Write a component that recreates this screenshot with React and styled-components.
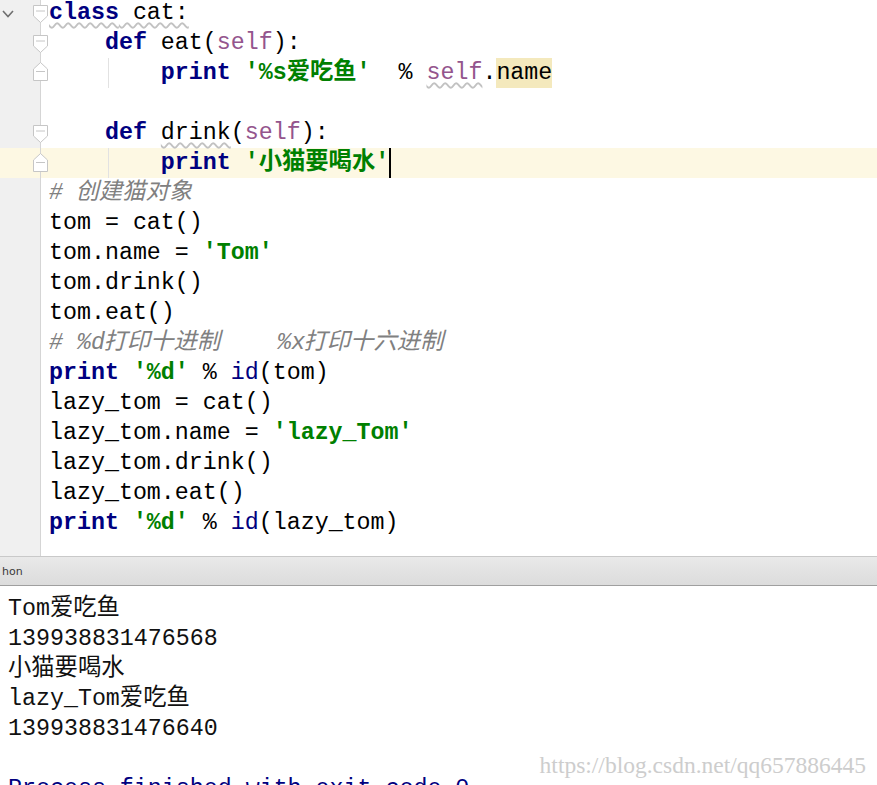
import React from 'react';
import styled, { createGlobalStyle } from 'styled-components';

const GlobalStyle = createGlobalStyle`
  html, body {
    margin: 0;
    padding: 0;
    width: 877px;
    height: 785px;
    overflow: hidden;
    background: #ffffff;
  }
`;

const CODE_FONT = `"Liberation Mono", "Noto Sans CJK SC", monospace`;

const Page = styled.div`
  width: 877px;
  height: 785px;
  display: flex;
  flex-direction: column;
  overflow: hidden;
  position: relative;
  font-family: ${CODE_FONT};
`;

/* ---------- editor ---------- */

const Editor = styled.div`
  height: 556px;
  flex: none;
  display: flex;
  flex-direction: column;
  border-bottom: 1px solid #c9c9c9;
  overflow: hidden;
`;

const Lines = styled.div`
  margin-top: -2px;
  display: flex;
  flex-direction: column;
`;

const Row = styled.div`
  display: flex;
  height: 30px;
  background: ${(p) => (p.$current ? '#fdf8e3' : '#ffffff')};
`;

const Gutter = styled.div`
  position: relative;
  width: 40px;
  flex: none;
  border-right: 1px solid #d5d5d5;
  background: ${(p) => (p.$current ? 'transparent' : '#f0f0f0')};
`;

const Filler = styled.div`
  flex: 1;
  display: flex;
`;

const Code = styled.div`
  position: relative;
  flex: 1;
  padding-left: 8px;
  font-size: 23.3px;
  line-height: 30px;
  white-space: pre;
  color: #000000;
`;

const Kw = styled.span`
  color: #000080;
  font-weight: bold;
`;

const Str = styled.span`
  color: #008000;
  font-weight: bold;
`;

const Self = styled.span`
  color: #94558d;
`;

const Builtin = styled.span`
  color: #000080;
`;

const Comment = styled.span`
  color: #808080;
  font-style: italic;
`;

const Slant = styled.span`
  display: inline-block;
  font-style: normal;
  transform: skewX(-14deg);
`;

const Wavy = styled.span`
  text-decoration: underline wavy #c2c2c2;
  text-decoration-thickness: 1.5px;
  text-underline-offset: 3px;
`;

const Mark = styled.span`
  background: #f4e9bd;
  display: inline-block;
  height: 30px;
`;

const Caret = styled.span`
  display: inline-block;
  width: 2px;
  height: 30px;
  background: #000000;
  vertical-align: top;
`;

const IndentGuide = styled.span`
  position: absolute;
  left: 67px;
  top: 0;
  bottom: 0;
  width: 1px;
  background: #e2e2e2;
`;

const FoldIcon = styled.svg`
  position: absolute;
  left: 33px;
  top: ${(p) => p.$top}px;
`;

const CheckIcon = styled.svg`
  position: absolute;
  left: 2px;
  top: 12px;
`;

const FoldStart = ({ top = 7 }) => (
  <FoldIcon $top={top} width="15" height="18" viewBox="0 0 15 18">
    <path d="M0.5 0.5 H14.5 V11 L7.5 17.5 L0.5 11 Z" fill="#ffffff" stroke="#c6c6c6" />
    <path d="M3 6 H12" stroke="#c6c6c6" />
  </FoldIcon>
);

const FoldEnd = ({ top = 4 }) => (
  <FoldIcon $top={top} width="15" height="19" viewBox="0 0 15 19">
    <path d="M0.5 7 L7.5 0.5 L14.5 7 V18.5 H0.5 Z" fill="#ffffff" stroke="#c6c6c6" />
    <path d="M3 9.5 H12" stroke="#c6c6c6" />
  </FoldIcon>
);

const Check = () => (
  <CheckIcon width="12" height="8" viewBox="0 0 12 8">
    <path d="M1 1 L6 6.5 L11 1" fill="none" stroke="#6f6f6f" strokeWidth="1.6" />
  </CheckIcon>
);

/* ---------- run panel ---------- */

const RunHeader = styled.div`
  height: 28px;
  flex: none;
  display: flex;
  align-items: center;
  padding-left: 2px;
  background: linear-gradient(#e9e9e9, #dcdcdc);
  border-bottom: 1px solid #9f9f9f;
  font-family: "DejaVu Sans", "Liberation Sans", sans-serif;
  font-size: 11px;
  color: #3a3a3a;
`;

const Output = styled.div`
  flex: none;
  padding: 8px 0 0 8px;
  font-size: 23.3px;
  line-height: 30px;
  white-space: pre;
  color: #111111;
`;

const OutLine = styled.div`
  height: 30px;
  color: ${(p) => (p.$system ? '#000080' : '#111111')};
`;

const Watermark = styled.div`
  position: absolute;
  right: 11px;
  bottom: 8px;
  font-family: "Liberation Serif", serif;
  font-size: 23.5px;
  line-height: 1;
  color: #cdcdcd;
`;

const code = [
  {
    fold: 'start',
    check: true,
    body: (
      <Wavy>
        <Kw>class</Kw> cat:
      </Wavy>
    ),
  },
  {
    fold: 'start',
    body: (
      <>
        {'    '}
        <Kw>def</Kw> eat(<Self>self</Self>):
      </>
    ),
  },
  {
    fold: 'end',
    guide: true,
    body: (
      <>
        {'        '}
        <Kw>print</Kw> <Str>'%s爱吃鱼'</Str>  % <Wavy><Self>self</Self></Wavy>.<Mark>name</Mark>
      </>
    ),
  },
  { body: '' },
  {
    fold: 'start',
    body: (
      <>
        {'    '}
        <Kw>def</Kw> <Wavy>drink</Wavy>(<Self>self</Self>):
      </>
    ),
  },
  {
    fold: 'end',
    foldTop: 5,
    guide: true,
    current: true,
    body: (
      <>
        {'        '}
        <Kw>print</Kw> <Str>'小猫要喝水'</Str>
        <Caret />
      </>
    ),
  },
  {
    body: (
      <Comment>
        # <Slant>创建猫对象</Slant>
      </Comment>
    ),
  },
  { body: 'tom = cat()' },
  {
    body: (
      <>
        tom.name = <Str>'Tom'</Str>
      </>
    ),
  },
  { body: 'tom.drink()' },
  { body: 'tom.eat()' },
  {
    body: (
      <Comment>
        # %d<Slant>打印十进制</Slant>    %x<Slant>打印十六进制</Slant>
      </Comment>
    ),
  },
  {
    body: (
      <>
        <Kw>print</Kw> <Str>'%d'</Str> % <Builtin>id</Builtin>(tom)
      </>
    ),
  },
  { body: 'lazy_tom = cat()' },
  {
    body: (
      <>
        lazy_tom.name = <Str>'lazy_Tom'</Str>
      </>
    ),
  },
  { body: 'lazy_tom.drink()' },
  { body: 'lazy_tom.eat()' },
  {
    body: (
      <>
        <Kw>print</Kw> <Str>'%d'</Str> % <Builtin>id</Builtin>(lazy_tom)
      </>
    ),
  },
];

const output = [
  'Tom爱吃鱼',
  '139938831476568',
  '小猫要喝水',
  'lazy_Tom爱吃鱼',
  '139938831476640',
  '',
];

export default function App() {
  return (
    <>
      <GlobalStyle />
      <Page>
        <Editor>
          <Lines>
            {code.map((line, i) => (
              <Row key={i} $current={line.current}>
                <Gutter $current={line.current}>
                  {line.check && <Check />}
                  {line.fold === 'start' && <FoldStart />}
                  {line.fold === 'end' && <FoldEnd top={line.foldTop} />}
                </Gutter>
                <Code>
                  {line.guide && <IndentGuide />}
                  {line.body}
                </Code>
              </Row>
            ))}
          </Lines>
          <Filler>
            <Gutter />
          </Filler>
        </Editor>
        <RunHeader>hon</RunHeader>
        <Output>
          {output.map((text, i) => (
            <OutLine key={i}>{text}</OutLine>
          ))}
          <OutLine $system>Process finished with exit code 0</OutLine>
        </Output>
        <Watermark>https://blog.csdn.net/qq657886445</Watermark>
      </Page>
    </>
  );
}
